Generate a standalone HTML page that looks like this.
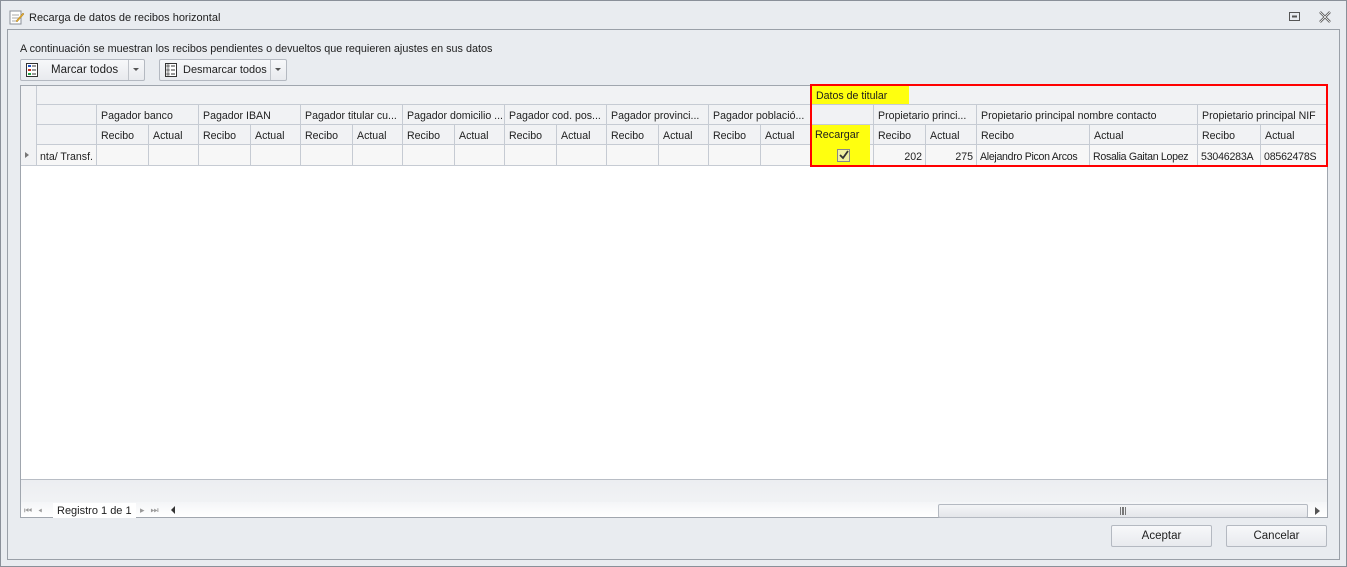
<!DOCTYPE html>
<html><head><meta charset="utf-8"><style>
*{box-sizing:border-box;margin:0;padding:0}
body{width:1347px;height:567px;overflow:hidden;background:#e9ecf0;font-family:"Liberation Sans",sans-serif;font-size:11px;color:#1e1e1e;position:relative}
.a{position:absolute}
.c{position:absolute;border-right:1px solid #c6cbd3;border-bottom:1px solid #c6cbd3;padding-left:4px;padding-top:2px;line-height:18px;white-space:nowrap;overflow:hidden;font-size:10.6px}
.h{background:#f1f2f4}
.d{background:#f7f7f7;padding-top:3px}
.btn{position:absolute;border:1px solid #b4b9c1;border-radius:2px;background:linear-gradient(#f7f8fa,#e8eaee);text-align:center;line-height:20px}
</style></head><body>
<div class="a" style="left:0;top:0;width:1347px;height:567px;border:1px solid #8a9099"></div>
<svg class="a" style="left:9px;top:9px" width="16" height="16"><rect x="1" y="2" width="11" height="13" fill="#fff" stroke="#8a8f99"/><path d="M3 6h7M3 9h7M3 12h5" stroke="#aaa"/><path d="M7 12l7-8 1 1-7 8z" fill="#e8b030" stroke="#a0701a" stroke-width=".5"/></svg>
<div class="a" style="left:29px;top:12px">Recarga de datos de recibos horizontal</div>
<svg class="a" style="left:1289px;top:12px" width="12" height="10"><rect x=".5" y=".5" width="10" height="8" fill="none" stroke="#555"/><rect x="3" y="3.5" width="5" height="2" fill="#555"/></svg>
<svg class="a" style="left:1319px;top:11px" width="12" height="12"><path d="M1 1l10 10M11 1L1 11" stroke="#555" stroke-width="2.4"/><path d="M1 1l10 10M11 1L1 11" stroke="#fff" stroke-width=".8"/></svg>
<div class="a" style="left:7px;top:29px;width:1333px;height:531px;border:1px solid #9aa0a8"></div>
<div class="a" style="left:20px;top:43px;font-size:10.8px">A continuación se muestran los recibos pendientes o devueltos que requieren ajustes en sus datos</div>
<div class="btn" style="left:20px;top:59px;width:125px;height:22px"></div>
<div class="a" style="left:128px;top:60px;height:20px;border-left:1px solid #c0c4ca"></div>
<svg class="a" style="left:26px;top:63px" width="12" height="14"><rect x=".5" y=".5" width="11" height="13" fill="#fff" stroke="#333"/><rect x="2" y="2" width="3" height="2" fill="#2050c0"/><rect x="2" y="6" width="3" height="2" fill="#c03020"/><rect x="2" y="10" width="3" height="2" fill="#20a040"/><path d="M6 3h4M6 7h4M6 11h4" stroke="#333"/></svg>
<div class="a" style="left:51px;top:64px;font-size:11.5px">Marcar todos</div>
<div class="a" style="left:133px;top:68px;border:3px solid transparent;border-top:3px solid #555"></div>
<div class="btn" style="left:159px;top:59px;width:128px;height:22px"></div>
<div class="a" style="left:270px;top:60px;height:20px;border-left:1px solid #c0c4ca"></div>
<svg class="a" style="left:165px;top:63px" width="12" height="14"><rect x=".5" y=".5" width="11" height="13" fill="#fff" stroke="#333"/><rect x="2" y="2" width="2" height="2" fill="none" stroke="#333" stroke-width=".7"/><rect x="2" y="6" width="2" height="2" fill="none" stroke="#333" stroke-width=".7"/><rect x="2" y="10" width="2" height="2" fill="none" stroke="#333" stroke-width=".7"/><path d="M6 3h4M6 7h4M6 11h4" stroke="#333"/></svg>
<div class="a" style="left:183px;top:64px;font-size:11px">Desmarcar todos</div>
<div class="a" style="left:275px;top:68px;border:3px solid transparent;border-top:3px solid #555"></div>

<div class="a" style="left:20px;top:85px;width:1308px;height:433px;border:1px solid #a0a6ae;background:#fff"></div>
<div class="a" style="left:21px;top:86px;width:1306px;height:19px;background:#f1f2f4;border-bottom:1px solid #c6cbd3"></div>
<div class="a" style="left:21px;top:86px;width:16px;height:80px;background:#f1f2f4;border-right:1px solid #c6cbd3"></div>
<div class="a" style="left:21px;top:165px;width:16px;border-bottom:1px solid #c6cbd3"></div>
<div class="a" style="left:25px;top:152px;border:3px solid transparent;border-left:4px solid #777"></div>
<div class="c h" style="left:37px;top:105px;width:60px;height:20px"></div>
<div class="c h" style="left:37px;top:125px;width:60px;height:20px"></div>
<div class="c d" style="left:37px;top:145px;width:60px;height:21px;padding-left:0;text-align:right;padding-right:3px">nta/ Transf.</div>

<div class="c h" style="left:97px;top:105px;width:102px;height:20px">Pagador banco</div>
<div class="c h" style="left:199px;top:105px;width:102px;height:20px">Pagador IBAN</div>
<div class="c h" style="left:301px;top:105px;width:102px;height:20px">Pagador titular cu...</div>
<div class="c h" style="left:403px;top:105px;width:102px;height:20px">Pagador domicilio ...</div>
<div class="c h" style="left:505px;top:105px;width:102px;height:20px">Pagador cod. pos...</div>
<div class="c h" style="left:607px;top:105px;width:102px;height:20px">Pagador provinci...</div>
<div class="c h" style="left:709px;top:105px;width:102px;height:20px">Pagador població...</div>
<div class="c h" style="left:811px;top:105px;width:63px;height:20px"></div>
<div class="c h" style="left:874px;top:105px;width:103px;height:20px">Propietario princi...</div>
<div class="c h" style="left:977px;top:105px;width:221px;height:20px">Propietario principal nombre contacto</div>
<div class="c h" style="left:1198px;top:105px;width:129px;height:20px">Propietario principal NIF</div>

<div class="c h" style="left:97px;top:125px;width:52px;height:20px">Recibo</div><div class="c h" style="left:149px;top:125px;width:50px;height:20px">Actual</div>
<div class="c h" style="left:199px;top:125px;width:52px;height:20px">Recibo</div><div class="c h" style="left:251px;top:125px;width:50px;height:20px">Actual</div>
<div class="c h" style="left:301px;top:125px;width:52px;height:20px">Recibo</div><div class="c h" style="left:353px;top:125px;width:50px;height:20px">Actual</div>
<div class="c h" style="left:403px;top:125px;width:52px;height:20px">Recibo</div><div class="c h" style="left:455px;top:125px;width:50px;height:20px">Actual</div>
<div class="c h" style="left:505px;top:125px;width:52px;height:20px">Recibo</div><div class="c h" style="left:557px;top:125px;width:50px;height:20px">Actual</div>
<div class="c h" style="left:607px;top:125px;width:52px;height:20px">Recibo</div><div class="c h" style="left:659px;top:125px;width:50px;height:20px">Actual</div>
<div class="c h" style="left:709px;top:125px;width:52px;height:20px">Recibo</div><div class="c h" style="left:761px;top:125px;width:50px;height:20px">Actual</div>
<div class="c h" style="left:811px;top:125px;width:63px;height:20px"></div>
<div class="c h" style="left:874px;top:125px;width:52px;height:20px">Recibo</div><div class="c h" style="left:926px;top:125px;width:51px;height:20px">Actual</div>
<div class="c h" style="left:977px;top:125px;width:113px;height:20px">Recibo</div><div class="c h" style="left:1090px;top:125px;width:108px;height:20px">Actual</div>
<div class="c h" style="left:1198px;top:125px;width:63px;height:20px">Recibo</div><div class="c h" style="left:1261px;top:125px;width:66px;height:20px">Actual</div>

<div class="c d" style="left:97px;top:145px;width:52px;height:21px"></div><div class="c d" style="left:149px;top:145px;width:50px;height:21px"></div>
<div class="c d" style="left:199px;top:145px;width:52px;height:21px"></div><div class="c d" style="left:251px;top:145px;width:50px;height:21px"></div>
<div class="c d" style="left:301px;top:145px;width:52px;height:21px"></div><div class="c d" style="left:353px;top:145px;width:50px;height:21px"></div>
<div class="c d" style="left:403px;top:145px;width:52px;height:21px"></div><div class="c d" style="left:455px;top:145px;width:50px;height:21px"></div>
<div class="c d" style="left:505px;top:145px;width:52px;height:21px"></div><div class="c d" style="left:557px;top:145px;width:50px;height:21px"></div>
<div class="c d" style="left:607px;top:145px;width:52px;height:21px"></div><div class="c d" style="left:659px;top:145px;width:50px;height:21px"></div>
<div class="c d" style="left:709px;top:145px;width:52px;height:21px"></div><div class="c d" style="left:761px;top:145px;width:50px;height:21px"></div>
<div class="c d" style="left:811px;top:145px;width:63px;height:21px"></div>
<div class="c d" style="left:874px;top:145px;width:52px;height:21px;text-align:right;padding-right:3px">202</div>
<div class="c d" style="left:926px;top:145px;width:51px;height:21px;text-align:right;padding-right:3px">275</div>
<div class="c d" style="left:977px;top:145px;width:113px;height:21px;padding-left:3px;letter-spacing:-0.3px">Alejandro Picon Arcos</div>
<div class="c d" style="left:1090px;top:145px;width:108px;height:21px;padding-left:3px;letter-spacing:-0.3px">Rosalia Gaitan Lopez</div>
<div class="c d" style="left:1198px;top:145px;width:63px;height:21px;padding-left:3px;letter-spacing:-0.2px">53046283A</div>
<div class="c d" style="left:1261px;top:145px;width:66px;height:21px;padding-left:3px;letter-spacing:-0.2px">08562478S</div>

<div class="a" style="left:811px;top:86px;width:98px;height:18px;background:#ffff0f;padding-left:5px;padding-top:2px;line-height:17px;font-size:10.6px">Datos de titular</div>
<div class="a" style="left:811px;top:125px;width:59px;height:40px;background:#ffff0f"></div>
<div class="a" style="left:815px;top:129px;font-size:10.8px">Recargar</div>
<div class="a" style="left:837px;top:149px;width:13px;height:13px;border:1px solid #888;background:#f0f0a0"></div>
<svg class="a" style="left:838px;top:150px" width="11" height="11"><path d="M2 5l3 3 5-7" stroke="#333" stroke-width="1.8" fill="none"/></svg>
<div class="a" style="left:810px;top:84px;width:518px;height:83px;border:2px solid #ff0000"></div>

<div class="a" style="left:21px;top:479px;width:1306px;height:38px;background:linear-gradient(#eceef1,#f4f5f7);border-top:1px solid #b8bdc5"></div>
<div class="a" style="left:21px;top:502px;width:1306px;height:15px;background:linear-gradient(#f4f5f7,#fff)"></div>
<div class="a" style="left:24px;top:505px;color:#999;font-size:9px;letter-spacing:6px">⏮◂</div>
<div class="a" style="left:53px;top:503px;width:83px;height:15px;background:#fff"></div>
<div class="a" style="left:57px;top:505px">Registro 1 de 1</div>
<div class="a" style="left:140px;top:505px;color:#999;font-size:9px;letter-spacing:6px">▸⏭</div>
<div class="a" style="left:171px;top:506px;border:4px solid transparent;border-right:4px solid #333;border-left:0"></div>
<div class="a" style="left:938px;top:504px;width:370px;height:14px;border:1px solid #b4b9c1;border-radius:2px;background:linear-gradient(#f4f5f7,#e4e6ea)"></div>
<div class="a" style="left:1120px;top:507px;width:6px;height:8px;border-left:1px solid #777;border-right:1px solid #777"><div style="margin-left:1px;width:2px;height:8px;border-left:1px solid #777;border-right:1px solid #777"></div></div>
<div class="a" style="left:1315px;top:507px;border:4px solid transparent;border-left:5px solid #555;border-right:0"></div>

<div class="btn" style="left:1111px;top:525px;width:101px;height:22px;font-size:11.5px">Aceptar</div>
<div class="btn" style="left:1226px;top:525px;width:101px;height:22px;font-size:11.5px">Cancelar</div>
</body></html>
